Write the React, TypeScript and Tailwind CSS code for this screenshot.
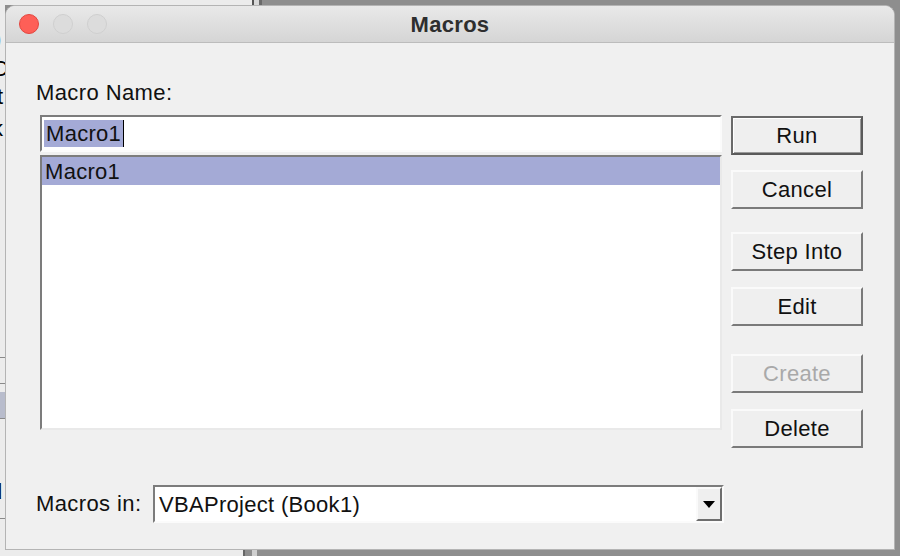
const font = { fontFamily: '"Liberation Sans", Arial, sans-serif' };

function MacButton({
  label,
  disabled,
  isDefault,
}: {
  label: string;
  disabled?: boolean;
  isDefault?: boolean;
}) {
  return (
    <button
      type="button"
      className={
        "flex h-[39px] w-[132px] items-center justify-center bg-[#efefef] text-[22px] leading-none tracking-[0.3px] " +
        (isDefault
          ? "border-2 border-t-[#6a6a6a] border-l-[#6a6a6a] border-r-[#5a5a5a] border-b-[#5a5a5a] shadow-[inset_1px_1px_0_#ffffff,inset_-1px_-1px_0_#9a9a9a] "
          : "border-2 border-t-[#fafafa] border-l-[#fafafa] border-r-[#7a7a7a] border-b-[#7a7a7a] ") +
        (disabled ? "text-[#a9a9a9]" : "text-[#111]")
      }
    >
      {label}
    </button>
  );
}

export default function App() {
  return (
    <div className="relative h-[556px] w-[900px] overflow-hidden bg-[#8e8e8e]" style={font}>
      {/* spreadsheet behind the dialog */}
      <div className="absolute left-0 top-0 h-[5px] w-[252px] bg-[#ececec]" />
      <div className="absolute left-[252px] top-0 h-[5px] w-[2px] bg-[#555]" />
      <div className="absolute left-[254px] top-0 h-[5px] w-[5px] bg-[#d8d8d8]" />
      <div className="absolute left-[259px] top-0 h-[5px] w-[3px] bg-[#6a6a6a]" />
      <div className="absolute left-0 top-0 h-[556px] w-[5px] overflow-hidden bg-[#ececec]">
        <div className="absolute left-[-6px] top-[28px] text-[22px] leading-none text-black">)</div>
        <div className="absolute left-[-8px] top-[58px] text-[22px] leading-none text-black">C</div>
        <div className="absolute left-[-3px] top-[86px] text-[22px] leading-none text-black">t</div>
        <div className="absolute left-[-8px] top-[118px] text-[22px] leading-none text-black">k</div>
        <div className="absolute left-0 top-[357px] h-px w-[5px] bg-[#8a8a8a]" />
        <div className="absolute left-0 top-[383px] h-px w-[5px] bg-[#8a8a8a]" />
        <div className="absolute left-0 top-[392px] h-[26px] w-[5px] bg-[#b8bccc]" />
        <div className="absolute left-0 top-[418px] h-px w-[5px] bg-[#8a8a8a]" />
        <div className="absolute left-[-10px] top-[481px] text-[22px] leading-none text-black">d</div>
        <div className="absolute left-0 top-[518px] h-px w-[5px] bg-[#8a8a8a]" />
      </div>
      <div className="absolute left-0 top-[550px] h-[6px] w-[243px] bg-[#ececec]" />
      <div className="absolute left-[243px] top-[550px] h-[6px] w-[2px] bg-[#666]" />
      <div className="absolute left-[252px] top-[550px] h-[6px] w-[5px] bg-[#cfcfcf]" />

      {/* dialog window */}
      <div className="absolute left-[5px] top-[5px] flex h-[545px] w-[890px] flex-col overflow-hidden rounded-t-[10px] border border-[#b4b4b4] bg-[#f0f0f0]">
        <div className="relative flex h-[37px] shrink-0 items-center justify-center border-b border-[#bcbcbc] bg-gradient-to-b from-[#e9e9e9] to-[#d5d5d5]">
          <div className="absolute left-[13px] top-[8px] flex gap-[14px]">
            <span className="h-[20px] w-[20px] rounded-full border border-[#e2463f] bg-[#fe5f57]" />
            <span className="h-[20px] w-[20px] rounded-full border border-[#cfcfcf] bg-[#dcdcdc]" />
            <span className="h-[20px] w-[20px] rounded-full border border-[#cfcfcf] bg-[#dcdcdc]" />
          </div>
          <span className="text-[22px] font-bold tracking-[0.3px] text-[#2e2e2e]">Macros</span>
        </div>

        <div className="flex flex-1 flex-col pl-[30px] pt-[37px]">
          <div className="text-[22px] leading-[26px] tracking-[0.4px] text-[#111]">Macro Name:</div>

          <div className="mt-[9px] flex gap-[9px] pl-[4px]">
            <div className="flex w-[682px] flex-col gap-[3px]">
              <div className="flex h-[37px] items-center border-2 border-t-[#7c7c7c] border-l-[#7c7c7c] border-r-[#fbfbfb] border-b-[#fbfbfb] bg-white pl-[2px]">
                <span className="bg-[#a4aad6] px-[2px] text-[22px] leading-[27px] tracking-[0.3px] text-[#111]">Macro1</span>
                <span className="h-[27px] w-px bg-black" />
              </div>
              <div className="h-[275px] border-2 border-t-[#7c7c7c] border-l-[#7c7c7c] border-r-[#e9e9e9] border-b-[#e9e9e9] bg-white">
                <div className="flex h-[28px] items-center bg-[#a4aad6] pl-[3px] text-[22px] tracking-[0.3px] text-[#111]">Macro1</div>
              </div>
            </div>

            <div className="flex flex-col pt-px">
              <MacButton label="Run" isDefault />
              <div className="h-[15px]" />
              <MacButton label="Cancel" />
              <div className="h-[23px]" />
              <MacButton label="Step Into" />
              <div className="h-[16px]" />
              <MacButton label="Edit" />
              <div className="h-[28px]" />
              <MacButton label="Create" disabled />
              <div className="h-[16px]" />
              <MacButton label="Delete" />
            </div>
          </div>

          <div className="mt-[37px] flex items-center">
            <span className="w-[117px] shrink-0 text-[22px] leading-[26px] tracking-[0.4px] text-[#111]">Macros in:</span>
            <div className="flex h-[38px] w-[571px] items-stretch border-2 border-t-[#7c7c7c] border-l-[#7c7c7c] border-r-[#fbfbfb] border-b-[#fbfbfb] bg-white">
              <div className="flex flex-1 items-center pl-[4px] text-[22px] tracking-[0.3px] text-[#111]">VBAProject (Book1)</div>
              <div className="flex w-[26px] items-center justify-center border-2 border-t-[#fafafa] border-l-[#fafafa] border-r-[#6e6e6e] border-b-[#6e6e6e] bg-[#efefef]">
                <svg width="12" height="7" viewBox="0 0 12 7">
                  <path d="M0 0 L12 0 L6 7 Z" fill="#000" />
                </svg>
              </div>
            </div>
          </div>
        </div>
      </div>
    </div>
  );
}
